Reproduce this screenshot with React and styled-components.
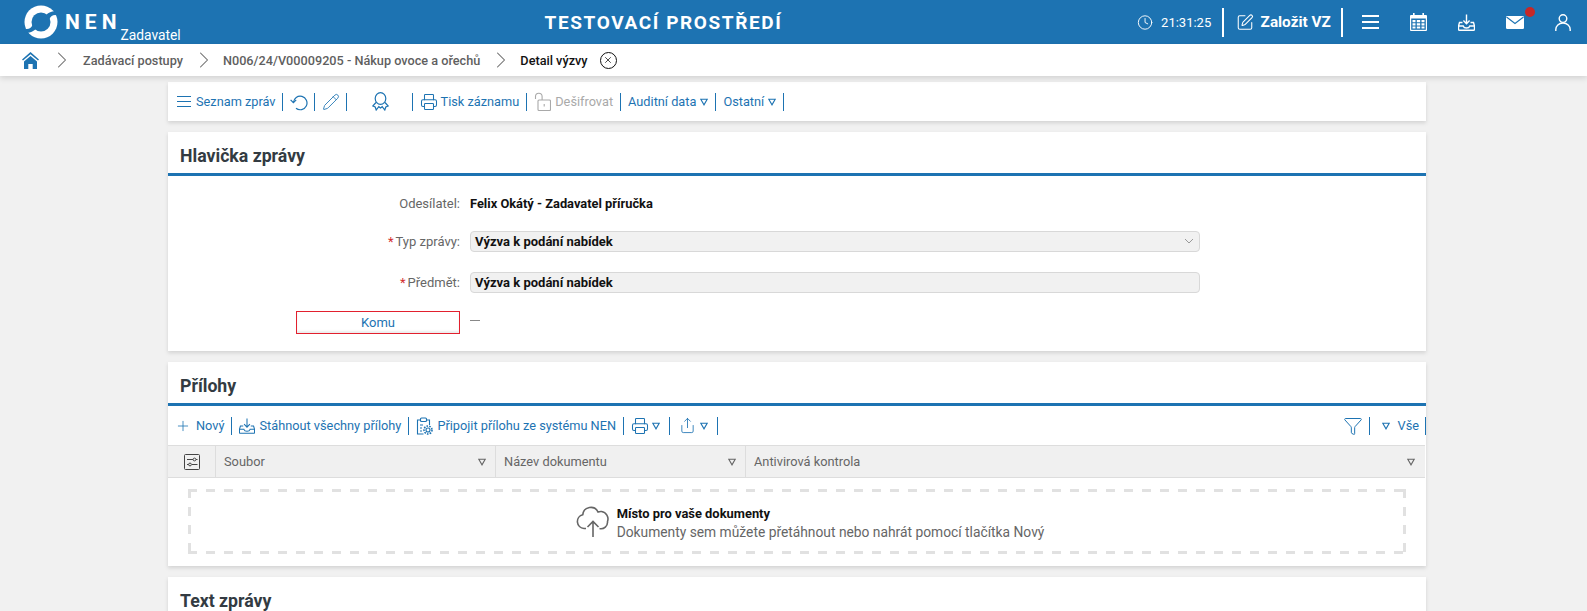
import React from "react";
import styled, { createGlobalStyle } from "styled-components";
import {
  ChevronRight,
  Clock,
  Filter,
  Pencil,
  Plus,
  Printer,
  Share,
  SquarePen,
  X,
} from "lucide-react";

const BLUE = "#1d73b2";
const DASH = "#e1e1e1";

const GlobalStyle = createGlobalStyle`
  html, body {
    margin: 0;
    height: 100%;
    overflow: hidden;
    background: #f1f1f1;
    font-family: Roboto, "Liberation Sans", sans-serif;
  }
  * { box-sizing: border-box; }
`;

const TopBar = styled.header`
  height: 44px;
  background: ${BLUE};
  color: #fff;
  display: flex;
  align-items: center;
`;
const Brand = styled.div`
  width: 190px;
  height: 44px;
  flex: none;
  display: flex;
  padding-left: 24px;
  align-items: center;
`;
const BrandName = styled.span`
  font-size: 21px;
  font-weight: 700;
  letter-spacing: 5px;
  margin-left: 7px;
  margin-top: -1px;
`;
const BrandRole = styled.span`
  font-size: 13.8px;
  align-self: flex-end;
  margin-bottom: 1px;
  margin-left: -1px;
`;
const EnvTitle = styled.div`
  flex: 1;
  text-align: center;
  font-size: 19px;
  font-weight: 700;
  letter-spacing: 1.6px;
`;
const TopRight = styled.div`
  width: 450px;
  flex: none;
  display: flex;
  align-items: center;
`;
const Time = styled.span`
  font-size: 13px;
  margin-left: 8px;
  width: 64px;
`;
const TopSep = styled.span`
  width: 2px;
  height: 29px;
  background: #fff;
`;
const EditIcon = styled(SquarePen)`
  margin-left: 12px;
`;
const NewOrder = styled.span`
  font-size: 15.3px;
  font-weight: 700;
  margin-left: 7px;
  width: 85px;
`;
const TopIcons = styled.div`
  display: flex;
  align-items: center;
  margin-left: 4px;
`;
const TopIcon = styled.span`
  width: 48px;
  display: flex;
  justify-content: center;
  position: relative;
`;
const Badge = styled.span`
  position: absolute;
  top: -9px;
  left: 34px;
  width: 10px;
  height: 10px;
  border-radius: 50%;
  background: #c62828;
`;

const Crumbs = styled.nav`
  height: 32px;
  background: #fff;
  box-shadow: 0 2px 6px rgba(0, 0, 0, 0.14);
  display: flex;
  align-items: center;
  padding-left: 22px;
  position: relative;
`;
const Crumb = styled.span`
  font-size: 12.7px;
  font-weight: 500;
  color: ${(p) => (p.$current ? "#111" : "#5f5f5f")};
  white-space: nowrap;
`;
const CrumbArrow = styled(ChevronRight)`
  color: #666;
  margin: 0 5px 0 7px;
  flex: none;
`;
const FirstArrow = styled(CrumbArrow)`
  margin: 0 7px 0 9px;
`;
const CloseMark = styled.span`
  width: 17px;
  height: 17px;
  margin-left: 12px;
  border: 1.4px solid #111;
  border-radius: 50%;
  display: flex;
  align-items: center;
  justify-content: center;
`;

const Page = styled.main`
  width: 1258px;
  margin: 6px 0 0 168px;
  display: flex;
  flex-direction: column;
  gap: 11px;
`;
const Card = styled.section`
  background: #fff;
  box-shadow: 0 2px 4px rgba(0, 0, 0, 0.13);
`;
const Toolbar = styled.div`
  height: 39px;
  display: flex;
  align-items: center;
  padding-left: ${(p) => p.$pad ?? 9}px;
  color: ${BLUE};
  font-size: 12.75px;
`;
const Tool = styled.span`
  display: flex;
  align-items: center;
  gap: ${(p) => p.$gap ?? 4}px;
  color: ${(p) => (p.$off ? "#a9a9a9" : BLUE)};
  white-space: nowrap;
`;
const ToolSep = styled.span`
  width: 1px;
  height: 18px;
  background: ${BLUE};
  margin: 0 ${(p) => p.$r ?? 7}px 0 ${(p) => p.$l ?? 7}px;
  flex: none;
`;
const Spacer = styled.span`
  flex: 1;
`;
const SectionTitle = styled.h2`
  margin: 0;
  height: 44px;
  padding: 12px 12px 0;
  font-size: 17.7px;
  line-height: 24px;
  font-weight: 700;
  color: #333b42;
  border-bottom: 3px solid ${BLUE};
`;
const BareTitle = styled(SectionTitle)`
  border-bottom: 0;
`;
const Form = styled.div`
  display: grid;
  grid-template-columns: 292px 730px;
  grid-template-rows: 36px 40px 42px 38px;
  column-gap: 10px;
  padding: 9px 0 10px;
  align-items: center;
  font-size: 13px;
`;
const Label = styled.div`
  text-align: right;
  color: #666;
`;
const Req = styled.span`
  color: #d32f2f;
  margin-right: 2px;
`;
const Value = styled.div`
  font-weight: 700;
  color: #111;
  font-size: 12.85px;
`;
const Field = styled.div`
  height: 21px;
  padding: 0 5px 0 4px;
  background: #f1f1f1;
  border: 1px solid #d8d8d8;
  border-radius: 4px;
  font-weight: 700;
  color: #111;
  display: flex;
  align-items: center;
  justify-content: space-between;
`;
const KomuCell = styled.div`
  display: flex;
  justify-content: flex-end;
`;
const KomuButton = styled.button`
  width: 164px;
  height: 23px;
  padding: 0;
  background: #fff;
  border: 1px solid #e2202e;
  box-shadow: inset 0 -2px 2px rgba(0, 0, 0, 0.08);
  color: ${BLUE};
  font: 13px Roboto, sans-serif;
`;
const Dash = styled.div`
  width: 10px;
  height: 1px;
  background: #888;
  margin-bottom: 3px;
`;
const TableHead = styled.div`
  height: 33px;
  display: grid;
  grid-template-columns: 48px 280px 250px 1fr;
  background: #f0f0f0;
  border-top: 1px solid #ddd;
  border-bottom: 1px solid #ddd;
  margin-right: 1px;
`;
const HeadCell = styled.div`
  display: flex;
  align-items: center;
  justify-content: ${(p) => (p.$center ? "center" : "space-between")};
  padding: ${(p) => (p.$center ? "0" : "0 9px 0 8px")};
  border-right: 1px solid ${(p) => (p.$last ? "transparent" : "#ddd")};
  font-size: 12.8px;
  color: #666;
`;
// dashes are longer than a native 3px dashed border, so they are painted as gradients
const DropZone = styled.div`
  height: 65px;
  margin: 11px 20px 12px;
  background:
    linear-gradient(to right, ${DASH} 9px, transparent 9px) top left / 18px 3px repeat-x,
    linear-gradient(to right, ${DASH} 9px, transparent 9px) bottom left / 18px 3px repeat-x,
    linear-gradient(to bottom, ${DASH} 9px, transparent 9px) top left / 3px 18px repeat-y,
    linear-gradient(to bottom, ${DASH} 9px, transparent 9px) top right / 3px 18px repeat-y;
  display: flex;
  align-items: center;
  justify-content: center;
  gap: 8px;
  padding-left: 26px;
`;
const DropText = styled.div`
  font-size: 13.8px;
  line-height: 19px;
  color: #666;
  margin-top: 3px;
`;
const DropTitle = styled.div`
  font-size: 12.9px;
  font-weight: 700;
  color: #111;
`;

// small triangle used by dropdown tools and table filters
const Caret = ({ color = BLUE }) => (
  <svg width="8" height="8" viewBox="0 0 8 8" fill="none" stroke={color} strokeWidth="1.1">
    <path d="M.8 1.2h6.4L4 6.8z" />
  </svg>
);

const Logo = () => (
  <svg width="34" height="36" viewBox="0 0 34 36">
    <circle cx="17" cy="18" r="16.5" fill="#fff" />
    <circle cx="17" cy="18" r="9.5" fill={BLUE} />
    <path d="M22 11C26 7.5 30 6.5 34 8v3.5C30 10 27 11.5 25.5 15z" fill={BLUE} />
    <path d="M12 25C8 28.5 4 29.5 0 28v-3.5C4 26 7 24.5 8.5 21z" fill={BLUE} />
  </svg>
);

const Bars = ({ width = 17, gap = 6, w = 2 }) => (
  <svg width={width} height={gap * 2 + w} viewBox={`0 0 ${width} ${gap * 2 + w}`} fill="none" stroke="currentColor" strokeWidth={w}>
    <path d={`M0 ${w / 2}h${width}M0 ${w / 2 + gap}h${width}M0 ${w / 2 + gap * 2}h${width}`} />
  </svg>
);

const TrayDown = ({ size = 17, color = "currentColor", w = 1.4 }) => (
  <svg width={size} height={size} viewBox="0 0 17 17" fill="none" stroke={color} strokeWidth={w}>
    <path d="M8.5 0.5v9M5.4 6.6l3.1 3.2 3.1-3.2" />
    <path d="M4.5 8.5H1.5l-1 3.5v3.3q0 1 1 1h14q1 0 1-1V12l-1-3.5h-3" />
    <path d="M.8 12h4.4q.6 2 3.3 2t3.3-2h4.4" />
  </svg>
);

const Calendar = () => (
  <svg width="17" height="18" viewBox="0 0 17 18">
    <path fill="#fff" d="M3 0h1.6v2h7.8V0H14v2h2q1 0 1 1v14q0 1-1 1H1q-1 0-1-1V3q0-1 1-1h2z" />
    <rect x="1.2" y="5.5" width="14.6" height="11.3" fill={BLUE} />
    <path fill="#fff" d="M2.5 7h3v2.2h-3zM6.8 7h3.4v2.2H6.8zM11.5 7h3v2.2h-3zM2.5 10.2h3v2.2h-3zM6.8 10.2h3.4v2.2H6.8zM11.5 10.2h3v2.2h-3zM2.5 13.4h3v2.2h-3zM6.8 13.4h3.4v2.2H6.8zM11.5 13.4h3v2.2h-3z" />
  </svg>
);

const Mail = () => (
  <svg width="18" height="13" viewBox="0 0 18 13">
    <rect width="18" height="13" rx="1.2" fill="#fff" />
    <path d="M.5 1 9 7.5 17.5 1" fill="none" stroke={BLUE} strokeWidth="1.1" />
  </svg>
);

const Person = () => (
  <svg width="16" height="17" viewBox="0 0 16 17" fill="none" stroke="currentColor" strokeWidth="1.4">
    <circle cx="8" cy="4.6" r="3.8" />
    <path d="M.8 17v-1.5c0-3.6 3-6.5 7.2-6.5s7.2 2.9 7.2 6.5V17" />
  </svg>
);

const Home = () => (
  <svg width="17" height="17" viewBox="0 0 17 17" fill={BLUE}>
    <path d="M8.5 0 17 7.4l-1 1.1-7.5-6.3L1 8.5 0 7.4z" />
    <path d="M8.5 4 15 9.4V17h-4.3v-5H6.3v5H2V9.4z" />
  </svg>
);

const Undo = () => (
  <svg width="18" height="18" viewBox="0 0 18 18" fill="none" stroke={BLUE} strokeWidth="1.2">
    <path d="M3.4 9.5A6.8 6.8 0 1 1 6 15.3" />
    <path d="M.6 6.9l2.8 2.8 2.8-2.8" />
  </svg>
);

const Rosette = () => (
  <svg width="17" height="19" viewBox="0 0 17 19" fill="none" stroke={BLUE} strokeWidth="1.2">
    <ellipse cx="8.5" cy="6.5" rx="5.3" ry="5.8" />
    <path d="M4 10.5.8 14l2.4 1 1 3 2.6-3.3 1.7 1.3 1.7-1.3 2.6 3.3 1-3 2.4-1L13 10.5" />
  </svg>
);

const OpenLock = () => (
  <svg width="17" height="19" viewBox="0 0 17 19" fill="none" stroke="#a9a9a9" strokeWidth="1.1">
    <path d="M1.5 7V4.5a3.3 3.3 0 0 1 6.6 0V8" />
    <rect x="4" y="8" width="12.5" height="10.5" rx="1" />
    <path d="M10.2 12v2.5" />
  </svg>
);

const ClipGear = () => (
  <svg width="17" height="18" viewBox="0 0 17 18" fill="none" stroke={BLUE} strokeWidth="1.1">
    <path d="M4 3H1.5v14h6M11 3h2.5v5" />
    <rect x="4.5" y="1" width="6" height="3.5" rx="1" />
    <path d="M4 8h3M4 11h2M4 14h2" />
    <circle cx="12" cy="13" r="2" />
    <circle cx="12" cy="13" r="4" strokeDasharray="1.6 1.2" strokeWidth="1.6" />
  </svg>
);

const ColumnsBox = () => (
  <svg width="16" height="16" viewBox="0 0 16 16" fill="none" stroke="#444" strokeWidth="1">
    <rect x=".5" y=".5" width="15" height="15" rx="1" />
    <path d="M3 5.5h6M12 5.5h1.5M3 10.5h1.5M8 10.5h5.5" />
    <circle cx="10.5" cy="5.5" r="1.4" />
    <circle cx="6" cy="10.5" r="1.4" />
  </svg>
);

const CloudUp = () => (
  <svg width="33" height="33" viewBox="0 0 33 33" fill="none" stroke="#666" strokeWidth="1.6">
    <path d="M10 23.5H8a7 7 0 0 1-1.2-13.8A8 8 0 0 1 22 7a7.5 7.5 0 0 1 3.5-.5 7.5 7.5 0 0 1 6 10 6.5 6.5 0 0 1-8 7" />
    <path d="M17 32V17M11.5 22 17 16.5 22.5 22" />
  </svg>
);

function App() {
  return (
    <>
      <GlobalStyle />
      <TopBar>
        <Brand>
          <Logo />
          <BrandName>NEN</BrandName>
          <BrandRole>Zadavatel</BrandRole>
        </Brand>
        <EnvTitle>TESTOVACÍ PROSTŘEDÍ</EnvTitle>
        <TopRight>
          <Clock size={17} strokeWidth={1.4} />
          <Time>21:31:25</Time>
          <TopSep />
          <EditIcon size={19} strokeWidth={1.4} />
          <NewOrder>Založit VZ</NewOrder>
          <TopSep />
          <TopIcons>
            <TopIcon>
              <Bars />
            </TopIcon>
            <TopIcon>
              <Calendar />
            </TopIcon>
            <TopIcon>
              <TrayDown />
            </TopIcon>
            <TopIcon>
              <Mail />
              <Badge />
            </TopIcon>
            <TopIcon>
              <Person />
            </TopIcon>
          </TopIcons>
        </TopRight>
      </TopBar>

      <Crumbs>
        <Home />
        <FirstArrow size={28} strokeWidth={0.9} />
        <Crumb>Zadávací postupy</Crumb>
        <CrumbArrow size={28} strokeWidth={0.9} />
        <Crumb>N006/24/V00009205 - Nákup ovoce a ořechů</Crumb>
        <CrumbArrow size={28} strokeWidth={0.9} />
        <Crumb $current>Detail výzvy</Crumb>
        <CloseMark>
          <X size={10} strokeWidth={1.8} color="#111" />
        </CloseMark>
      </Crumbs>

      <Page>
        <Card>
          <Toolbar>
            <Tool $gap={5}>
              <Bars width={14} gap={5} w={1.1} />
              Seznam zpráv
            </Tool>
            <ToolSep $l={6} />
            <Tool>
              <Undo />
            </Tool>
            <ToolSep $l={6} />
            <Tool>
              <Pencil size={18} strokeWidth={1.15} />
            </Tool>
            <ToolSep $l={6} $r={25} />
            <Tool>
              <Rosette />
            </Tool>
            <ToolSep $l={23} />
            <Tool $gap={3}>
              <Printer size={18} strokeWidth={1.4} />
              Tisk záznamu
            </Tool>
            <ToolSep />
            <Tool $off $gap={4}>
              <OpenLock />
              Dešifrovat
            </Tool>
            <ToolSep />
            <Tool>
              Auditní data <Caret />
            </Tool>
            <ToolSep />
            <Tool>
              Ostatní <Caret />
            </Tool>
            <ToolSep />
          </Toolbar>
        </Card>

        <Card>
          <SectionTitle>Hlavička zprávy</SectionTitle>
          <Form>
            <Label>Odesílatel:</Label>
            <Value>Felix Okátý - Zadavatel příručka</Value>
            <Label>
              <Req>*</Req>Typ zprávy:
            </Label>
            <Field>
              Výzva k podání nabídek
              <svg width="10" height="6" viewBox="0 0 10 6" fill="none" stroke="#999">
                <path d="m1 1 4 4 4-4" />
              </svg>
            </Field>
            <Label>
              <Req>*</Req>Předmět:
            </Label>
            <Field>Výzva k podání nabídek</Field>
            <KomuCell>
              <KomuButton>Komu</KomuButton>
            </KomuCell>
            <Dash />
          </Form>
        </Card>

        <Card>
          <SectionTitle>Přílohy</SectionTitle>
          <Toolbar $pad={7}>
            <Tool $gap={5}>
              <Plus size={16} strokeWidth={1.2} />
              Nový
            </Tool>
            <ToolSep />
            <Tool>
              <TrayDown color={BLUE} size={16} w={1.1} />
              Stáhnout všechny přílohy
            </Tool>
            <ToolSep />
            <Tool>
              <ClipGear />
              Připojit přílohu ze systému NEN
            </Tool>
            <ToolSep />
            <Tool $gap={3}>
              <Printer size={18} strokeWidth={1.4} />
              <Caret />
            </Tool>
            <ToolSep $l={9} $r={9} />
            <Tool $gap={4}>
              <Share size={17} strokeWidth={1.2} />
              <Caret />
            </Tool>
            <ToolSep $l={9} />
            <Spacer />
            <Tool>
              <Filter size={20} strokeWidth={1.2} />
            </Tool>
            <ToolSep $l={6} $r={12} />
            <Tool $gap={8}>
              <Caret />
              Vše
            </Tool>
            <ToolSep $l={6} $r={0} />
          </Toolbar>
          <TableHead>
            <HeadCell $center>
              <ColumnsBox />
            </HeadCell>
            <HeadCell>
              Soubor <Caret color="#666" />
            </HeadCell>
            <HeadCell>
              Název dokumentu <Caret color="#666" />
            </HeadCell>
            <HeadCell $last>
              Antivirová kontrola <Caret color="#666" />
            </HeadCell>
          </TableHead>
          <DropZone>
            <CloudUp />
            <DropText>
              <DropTitle>Místo pro vaše dokumenty</DropTitle>
              Dokumenty sem můžete přetáhnout nebo nahrát pomocí tlačítka Nový
            </DropText>
          </DropZone>
        </Card>

        <Card>
          <BareTitle>Text zprávy</BareTitle>
        </Card>
      </Page>
    </>
  );
}

export default App;
